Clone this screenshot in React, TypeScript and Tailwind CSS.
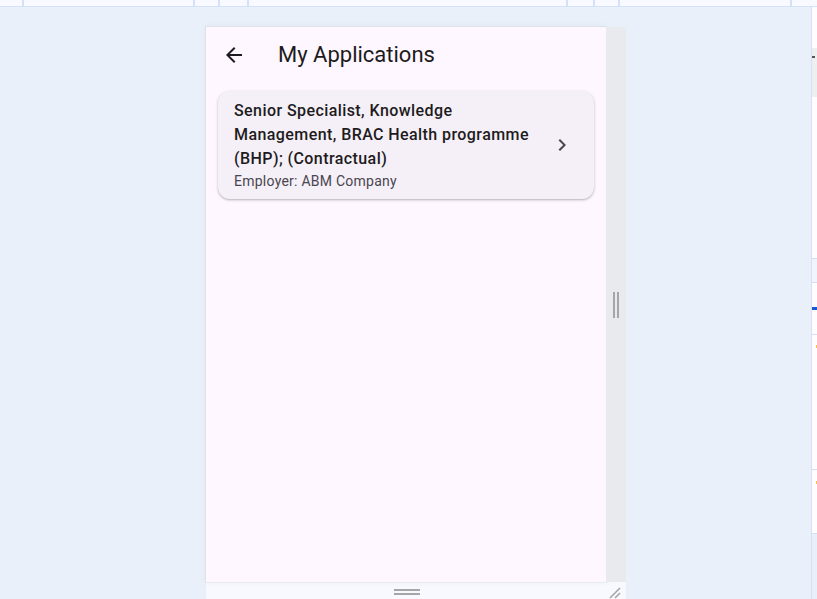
import React from 'react';

const font = { fontFamily: 'Roboto, "Noto Sans", sans-serif' };

// markers in the top toolbar strip
const tickXs = [22, 193, 218, 247, 566, 593, 618, 790];

const Toolbar: React.FC = () => (
  <div className="relative h-[7px] shrink-0 border-b border-[#d3e1fb] bg-[#f8faff]">
    {tickXs.map(x => (
      <div key={x} className="absolute top-0 h-[6px] w-[2px] bg-[#d3e1fb]" style={{ left: x }} />
    ))}
  </div>
);

const ApplicationCard: React.FC = () => (
  <div className="mx-3 mt-2 flex items-center rounded-xl bg-[#f5f0f7] py-2 pl-4 pr-5 shadow-[0_1px_2px_rgba(0,0,0,0.22),0_1px_3px_1px_rgba(0,0,0,0.06)]">
    <div className="flex-1 pr-4">
      <div className="text-[16px] font-medium leading-6 tracking-[0.42px] text-[#1d1b20]">
        Senior Specialist, Knowledge Management, BRAC Health programme (BHP); (Contractual)
      </div>
      <div className="text-[14px] leading-5 tracking-[0.25px] text-[#49454f]">Employer: ABM Company</div>
    </div>
    <svg width="24" height="24" viewBox="0 0 24 24" fill="#49454f">
      <path d="M10 6 8.59 7.41 13.17 12l-4.58 4.59L10 18l6-6z" />
    </svg>
  </div>
);

const Phone: React.FC = () => (
  <div className="h-[555px] w-[400px] bg-[#fef7ff] shadow-[0_0_0_1px_rgba(0,0,0,0.04),0_0_8px_rgba(0,0,0,0.05)]">
    <div className="flex h-14 items-center">
      <div className="flex h-12 w-12 items-center justify-center ml-1">
        <svg width="24" height="24" viewBox="0 0 24 24" fill="#1d1b20">
          <path d="M20 11H7.83l5.59-5.59L12 4l-8 8 8 8 1.41-1.41L7.83 13H20v-2z" />
        </svg>
      </div>
      <div className="ml-5 text-[22px] leading-7 text-[#1d1b20]">My Applications</div>
    </div>
    <ApplicationCard />
  </div>
);

const SideHandle: React.FC = () => (
  <div className="flex h-[555px] w-5 items-center justify-center bg-[#e9eaee]">
    <div className="flex gap-[2px]">
      <div className="h-[26px] w-[2px] bg-[#a6a6a6]" />
      <div className="h-[26px] w-[2px] bg-[#a6a6a6]" />
    </div>
  </div>
);

const BottomBar: React.FC = () => (
  <div className="flex h-[17px] w-[420px] items-center bg-[#f7f9fe]">
    <div className="flex flex-1 flex-col items-center gap-[2px] pt-[2px]">
      <div className="h-[2px] w-[26px] bg-[#a6a6a6]" />
      <div className="h-[2px] w-[26px] bg-[#a6a6a6]" />
    </div>
    <svg width="14" height="14" viewBox="0 0 14 14" className="mr-1 mt-1">
      <path d="M2 12 12 2M7 12 12 7" stroke="#a6a6a6" strokeWidth="1.6" />
    </svg>
  </div>
);

const RightPanel: React.FC = () => (
  <div className="flex w-[6px] shrink-0 flex-col border-l border-[#d5e0f5] bg-[#fdfdff]">
    <div className="h-[41px]" />
    <div className="h-[49px] bg-[#eeeff1]">
      <div className="mt-[8px] h-[2px] w-[3px] bg-[#555]" />
    </div>
    <div className="h-[162px] border-b border-[#d5e0f5]" />
    <div className="h-[24px] border-b border-[#d5e0f5] bg-[#f1f4fa]" />
    <div className="h-[24px]" />
    <div className="h-[3px] bg-[#1a5ad0]" />
    <div className="h-[25px] border-b border-[#d5e0f5]" />
    <div className="h-[10px]" />
    <div className="ml-[4px] h-[3px] w-[2px] bg-[#f6c04a]" />
    <div className="h-[122px] border-b border-[#d5e0f5]" />
    <div className="h-[11px]" />
    <div className="ml-[4px] h-[3px] w-[2px] bg-[#f6c04a]" />
    <div className="h-[50px] border-b border-[#d5e0f5]" />
    <div className="flex-1 bg-[#eaf0f9]" />
  </div>
);

const App: React.FC = () => {
  return (
    <div className="flex h-[599px] w-[817px] flex-col overflow-hidden bg-[#eaf0f9]" style={font}>
      <Toolbar />
      <div className="flex flex-1">
        <div className="flex-1 pl-[206px] pt-5">
          <div className="flex">
            <Phone />
            <SideHandle />
          </div>
          <BottomBar />
        </div>
        <RightPanel />
      </div>
    </div>
  );
};

export default App;
